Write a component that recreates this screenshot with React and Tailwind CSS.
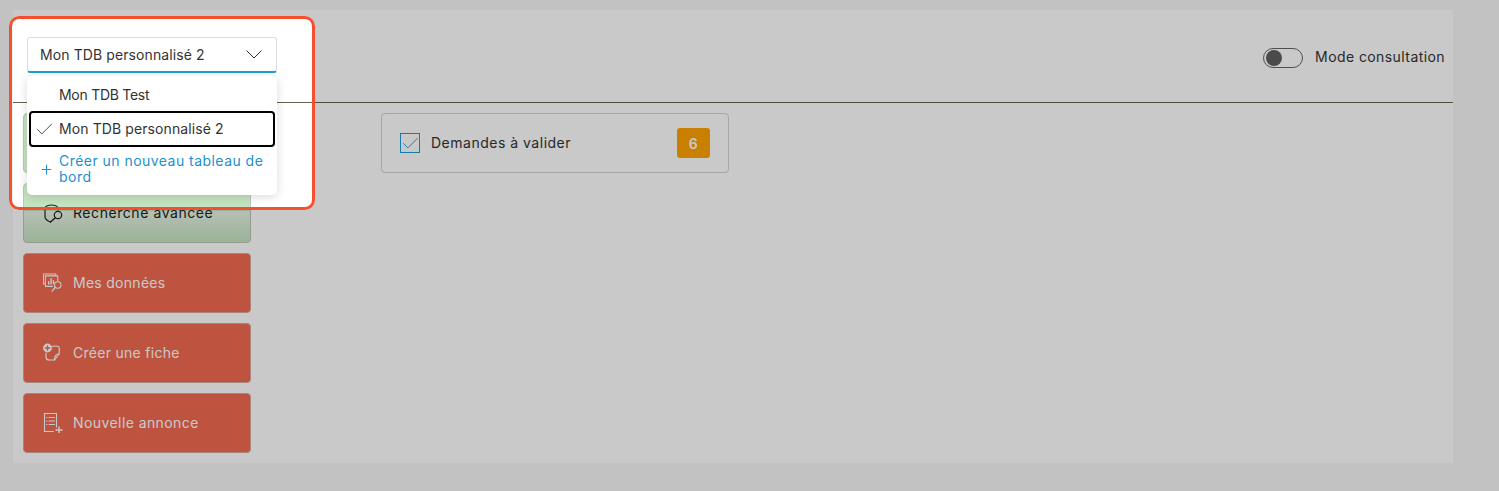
import { Check, Plus } from "lucide-react";

function SearchShieldIcon() {
  return (
    <svg width="20" height="20" viewBox="0 0 20 20" fill="none" stroke="#222" strokeWidth="1.2" strokeLinecap="round" strokeLinejoin="round">
      <path d="M15 7 V5 C15 3 11 2 8.5 2 C6 2 2 3 2 5 V14 C2 16 5 18.5 7.5 19" />
      <circle cx="15" cy="12" r="3.7" />
      <path d="M12.3 14.7 L7.5 19" strokeWidth="1.4" />
    </svg>
  );
}

function DataIcon() {
  return (
    <svg width="21" height="21" viewBox="0 0 21 21" fill="none" stroke="#fff" strokeWidth="1.1" strokeLinecap="round" strokeLinejoin="round">
      <path d="M2.5 11 H0.5 V0.5 H13.5 V2" />
      <path d="M10 13.5 H2.5 V2.5 H15.5 V7.5" />
      <path d="M6 11 V8.5 M8.5 11 V5.5 M11 10.5 V7.5" strokeWidth="1.5" />
      <circle cx="15.5" cy="12" r="3.4" />
      <path d="M13 14.5 L9.5 18.5" strokeWidth="1.4" />
    </svg>
  );
}

function NoteIcon() {
  return (
    <svg width="20" height="20" viewBox="0 0 20 20" fill="none" stroke="#fff" strokeWidth="1.2" strokeLinecap="round" strokeLinejoin="round">
      <path d="M8 3.5 C11 3 14.5 3 15.5 3.5 C16.5 4 16.5 7 16 11 L11.5 17 H6 C4 17 3 16 3 14 V10" />
      <path d="M16 11 C13.5 11 11.5 12 11.5 17" />
      <circle cx="4.5" cy="5" r="4.4" fill="#fff" stroke="none" />
      <path d="M4.5 2.8 V7.2 M2.3 5 H6.7" stroke="#f06a52" strokeWidth="1.3" />
    </svg>
  );
}

function AnnonceIcon() {
  return (
    <svg width="20" height="20" viewBox="0 0 20 20" fill="none" stroke="#fff" strokeWidth="1.1" strokeLinecap="round">
      <path d="M10.5 18.5 H1.5 V0.5 H13.5 V14" />
      <path d="M3.5 4.5 H4 M6 4.5 H11.5 M3.5 8 H4 M6 8 H11.5 M3.5 11.5 H4 M6 11.5 H11.5" />
      <path d="M16 14 V20 M13 17 H19" strokeWidth="1.4" />
    </svg>
  );
}

function SideButton({ icon, label, green, fade, tracking }) {
  return (
    <div
      className={`relative flex h-[60px] items-center gap-[10px] rounded-[4px] border pl-[19px] text-[14px] ${
        green
          ? "border-[#b9c9b6] bg-[#c4e3c0] text-[#222]"
          : "border-[#d5a89f] bg-[#f16a52] text-white"
      }`}
    >
      {fade && (
        <div className="absolute inset-x-0 top-[27px] h-[32px] bg-gradient-to-b from-white/60 to-transparent" />
      )}
      <span className="relative flex w-[20px] justify-center">{icon}</span>
      <span className={`relative mb-[2px] ${tracking}`}>{label}</span>
    </div>
  );
}

export default function App() {
  return (
    <div className="relative h-[491px] w-[1499px] overflow-hidden bg-[#f7f7f7] pl-[13px] pt-[10px] font-[Inter,sans-serif] tracking-[0.02em] text-[#333]">
      <div className="h-[453px] w-[1440px] bg-white">
        {/* top bar */}
        <div className="flex h-[93px] items-start justify-between border-b border-[#63634c] pl-[14px] pr-[8px] pt-[27px]">
          <div className="relative w-[250px]">
            <div className="flex h-[36px] items-center justify-between rounded-[3px] border border-b-2 border-[#ddd] border-b-[#1a9fd8] bg-white pl-[12px] pr-[14px] text-[14px]">
              <span className="tracking-[0.007em]">Mon TDB personnalisé 2</span>
              <svg width="16" height="9" viewBox="0 0 16 9" fill="none" stroke="#333" strokeWidth="1">
                <path d="M0.5 0.5 L8 8 L15.5 0.5" />
              </svg>
            </div>
            {/* open menu */}
            <div className="absolute left-0 top-[39px] z-10 w-[250px] rounded-[5px] bg-white text-[14px] shadow-[0_2px_10px_rgba(0,0,0,0.15)]">
              <div className="flex h-[35px] items-center pl-[32px] pt-[1px] tracking-[-0.02em]">Mon TDB Test</div>
              <div className="mx-[2px] flex h-[36px] items-center gap-[4px] rounded-[4px] border-2 border-black pl-[3px]">
                <Check size={21} strokeWidth={1} className="shrink-0" />
                <span className="mb-[2px] tracking-[0.007em]">Mon TDB personnalisé 2</span>
              </div>
              <div className="flex items-center pb-[10px] pt-[6px] text-[#1c90d0]">
                <span className="flex w-[32px] justify-center pl-[7px]">
                  <Plus size={15} strokeWidth={1.7} className="shrink-0" />
                </span>
                <span className="w-[212px] leading-[16px] tracking-[0.033em]">Créer un nouveau tableau de bord</span>
              </div>
            </div>
          </div>
          <div className="mt-[9px] flex items-center gap-[12px] text-[14px]">
            <div className="flex h-[20px] w-[40px] items-center rounded-full border border-[#666] pl-[2px]">
              <div className="h-[16px] w-[16px] rounded-full bg-[#606060]" />
            </div>
            <span className="mb-[2px] tracking-[0.03em]">Mode consultation</span>
          </div>
        </div>

        <div className="flex gap-[130px] pl-[10px] pt-[10px]">
          <div className="flex w-[228px] flex-col gap-[10px]">
            <SideButton green />
            <SideButton green fade icon={<SearchShieldIcon />} label="Recherche avancée" tracking="tracking-[0.04em]" />
            <SideButton icon={<DataIcon />} label="Mes données" tracking="tracking-[0.02em]" />
            <SideButton icon={<NoteIcon />} label="Créer une fiche" tracking="tracking-[0.02em]" />
            <SideButton icon={<AnnonceIcon />} label="Nouvelle annonce" tracking="tracking-[0.03em]" />
          </div>
          <div className="flex h-[60px] w-[348px] items-center justify-between rounded-[4px] border border-[#d3d3d3] pl-[18px] pr-[18px] text-[14px]">
            <div className="flex items-center gap-[11px]">
              <div className="flex h-[20px] w-[20px] items-center justify-center border border-[#1a9fd8]">
                <Check size={21} strokeWidth={1.1} className="shrink-0 text-[#1a9fd8]" />
              </div>
              <span className="mb-[2px] tracking-[0.036em]">Demandes à valider</span>
            </div>
            <div className="flex h-[30px] w-[33px] items-center justify-center rounded-[3px] bg-[#ffa300] text-[14px] font-semibold text-white">
              6
            </div>
          </div>
        </div>
      </div>

      {/* guided tour spotlight, dims everything outside it */}
      <div className="pointer-events-none absolute left-[9px] top-[16px] z-20 h-[194px] w-[306px] rounded-[10px] border-[3px] border-[#f4502f] shadow-[0_0_0_2000px_rgba(0,0,0,0.21)]" />
    </div>
  );
}
